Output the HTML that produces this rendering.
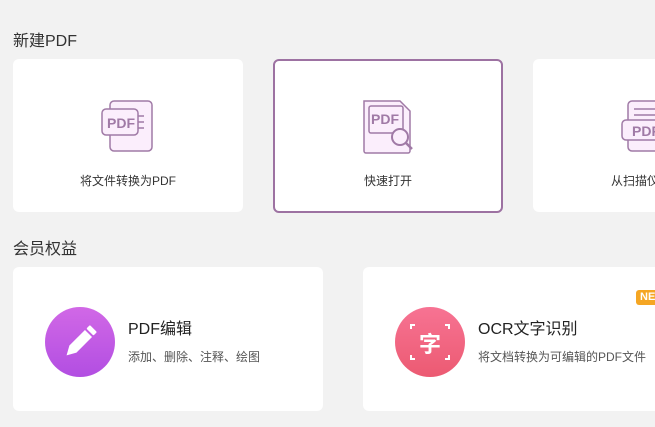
<!DOCTYPE html>
<html><head><meta charset="utf-8"><style>
*{margin:0;padding:0;box-sizing:border-box}
body{width:655px;height:427px;overflow:hidden;background:#f2f2f2;font-family:"Liberation Sans","Noto Sans CJK SC",sans-serif;position:relative;color:#333}
.h{position:absolute;left:13px;font-size:16px;color:#333}
.card{position:absolute;background:#fff;border-radius:6px}
.lbl{position:absolute;left:0;right:0;top:113px;text-align:center;font-size:12px;color:#333}
.ic{position:absolute;top:40px}
.t{position:absolute;font-size:16px;color:#222}
.s{position:absolute;font-size:12px;color:#555}
</style></head><body>
<div class="h" style="top:27px">新建PDF</div>
<div class="card" style="left:13px;top:59px;width:230px;height:153px">
 <svg class="ic" style="left:87px" width="56" height="56" viewBox="0 0 56 56" fill="#fbeefc" stroke="#a07aa6" stroke-width="1.5">
  <rect x="10" y="2" width="42" height="50" rx="4"/>
  <rect x="2" y="10" width="36" height="26" rx="4"/>
  <path d="M38 17h6M38 23h6M38 29h6" fill="none"/>
  <text x="7" y="29" font-size="14" font-weight="bold" fill="#a07aa6" stroke="none" font-family="Liberation Sans">PDF</text>
 </svg>
 <div class="lbl">将文件转换为PDF</div>
</div>
<div class="card" style="left:273px;top:59px;width:230px;height:154px;border:2px solid #9d72a2">
 <svg class="ic" style="left:86px;top:38px" width="56" height="56" viewBox="0 0 56 56" fill="#fbeefc" stroke="#a07aa6" stroke-width="1.5">
  <path d="M3 2h36l10 10v40a2 2 0 0 1-2 2H5a2 2 0 0 1-2-2z"/>
  <rect x="8" y="7" width="34" height="27" rx="2"/>
  <text x="10" y="25" font-size="14" font-weight="bold" fill="#a07aa6" stroke="none" font-family="Liberation Sans">PDF</text>
  <circle cx="39" cy="38" r="8" fill="#fbeefc" stroke-width="2"/>
  <path d="M45 44l6 6" stroke-width="2.5"/>
 </svg>
 <div class="lbl" style="top:111px">快速打开</div>
</div>
<div class="card" style="left:533px;top:59px;width:140px;height:153px">
 <svg class="ic" style="left:88px" width="56" height="56" viewBox="0 0 56 56" fill="#fbeefc" stroke="#a07aa6" stroke-width="1.5">
  <rect x="7" y="2" width="42" height="50" rx="4"/>
  <path d="M13 10h30M13 16h30" fill="none"/>
  <rect x="1" y="21" width="48" height="20" rx="4"/>
  <text x="11" y="37" font-size="14" font-weight="bold" fill="#a07aa6" stroke="none" font-family="Liberation Sans">PDF</text>
 </svg>
 <div class="lbl" style="left:78px;right:auto">从扫描仪</div>
</div>
<div class="h" style="top:235px">会员权益</div>
<div class="card" style="left:13px;top:267px;width:310px;height:144px">
 <div style="position:absolute;left:32px;top:40px;width:70px;height:70px;border-radius:50%;background:linear-gradient(#d168e6,#b24ee2)">
  <svg width="70" height="70" viewBox="0 0 70 70"><g transform="rotate(45 35 35)"><rect x="30" y="16" width="10" height="5" rx="1" fill="#fff"/><path d="M30 23h10v22l-5 9-5-9z" fill="#fff"/></g></svg>
 </div>
 <div class="t" style="left:115px;top:48px">PDF编辑</div>
 <div class="s" style="left:115px;top:81px">添加、删除、注释、绘图</div>
</div>
<div class="card" style="left:363px;top:267px;width:310px;height:144px">
 <div style="position:absolute;left:32px;top:40px;width:70px;height:70px;border-radius:50%;background:linear-gradient(#f77393,#ec5a72)">
  <svg width="70" height="70" viewBox="0 0 70 70" fill="none" stroke="#fff" stroke-width="2"><path d="M16 22v-4h4M50 18h4v4M54 48v4h-4M20 52h-4v-4"/></svg>
  <div style="position:absolute;left:0;right:0;top:20px;text-align:center;color:#fff;font-size:22px;font-weight:bold">字</div>
 </div>
 <div class="t" style="left:115px;top:48px">OCR文字识别</div>
 <div class="s" style="left:115px;top:81px">将文档转换为可编辑的PDF文件</div>
 <div style="position:absolute;left:273px;top:23px;width:30px;height:15px;background:#f5a623;border-radius:3px;color:#fff;font-size:11px;font-weight:bold;padding-left:4px;line-height:15px">NEW</div>
</div>
</body></html>
